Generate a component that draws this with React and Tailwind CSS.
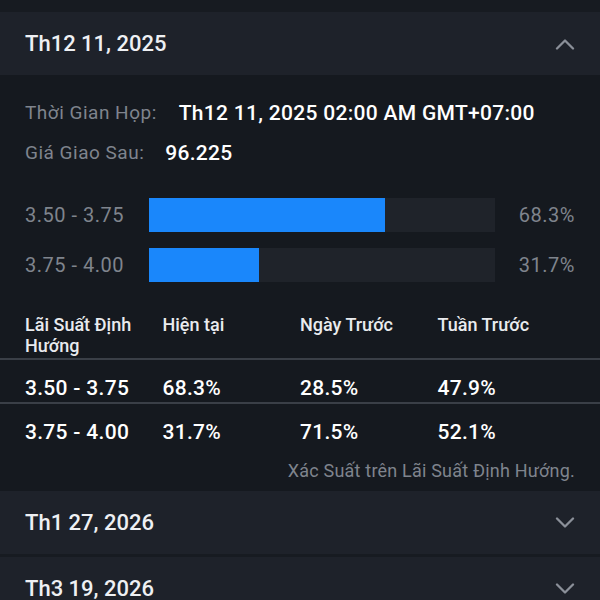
const bars = [
	{ range: "3.50 - 3.75", pct: 68.3 },
	{ range: "3.75 - 4.00", pct: 31.7 },
];

const rows = [
	["3.50 - 3.75", "68.3%", "28.5%", "47.9%"],
	["3.75 - 4.00", "31.7%", "71.5%", "52.1%"],
];

function Chevron({ up }) {
	return (
		<svg width="20" height="12" viewBox="0 0 20 12" fill="none" className="text-[#8b9099]">
			<path
				d={up ? "M2 10.5 L10 2.5 L18 10.5" : "M2 1.5 L10 9.5 L18 1.5"}
				stroke="currentColor"
				strokeWidth="2.3"
				strokeLinecap="round"
				strokeLinejoin="round"
			/>
		</svg>
	);
}

function Header({ title, open }) {
	return (
		<div className="flex h-[63px] shrink-0 items-center justify-between bg-[#1e222a] px-[25px]">
			<span className="text-[22px] font-medium leading-[26px] text-[#eef0f3]">{title}</span>
			<Chevron up={open} />
		</div>
	);
}

export default function App() {
	return (
		<div
			className="flex h-[600px] w-[600px] flex-col overflow-hidden bg-[#15191f]"
			style={{ fontFamily: "Roboto, 'Noto Sans', sans-serif" }}
		>
			<div className="h-[12px] shrink-0 bg-[#171b21]"></div>
			<Header title="Th12 11, 2025" open />

			{/* expanded body */}
			<div className="shrink-0 bg-[#15191f] pt-[26px] pb-[11px]">
				<div className="flex flex-col gap-[16px] px-[25px] leading-[24px]">
					<div className="flex items-center gap-[22px]">
						<span className="text-[19px] tracking-[0.5px] text-[#7f848d]">Thời Gian Họp:</span>
						<span className="text-[21px] font-medium tracking-[0.3px] text-white">
							Th12 11, 2025 02:00 AM GMT+07:00
						</span>
					</div>
					<div className="flex items-center gap-[21px]">
						<span className="text-[19px] tracking-[0.5px] text-[#7f848d]">Giá Giao Sau:</span>
						<span className="text-[21px] font-medium tracking-[0.3px] text-white">96.225</span>
					</div>
				</div>

				<div className="mt-[33px] flex flex-col gap-[16px] px-[25px]">
					{bars.map((b) => (
						<div key={b.range} className="flex h-[34px] items-center">
							<span className="w-[124px] text-[20px] tracking-[0.5px] text-[#7f848d]">{b.range}</span>
							<div className="h-full w-[346px] bg-[#1f232a]">
								<div className="h-full bg-[#1a87fb]" style={{ width: `${b.pct}%` }}></div>
							</div>
							<span className="flex-1 text-right text-[20px] tracking-[0.5px] text-[#7f848d]">{b.pct}%</span>
						</div>
					))}
				</div>

				<div className="mt-[32px] grid grid-cols-4 px-[25px] pb-[2px] text-[18px] font-medium leading-[21px] text-[#e9ebee]">
					<span className="pr-4">Lãi Suất Định Hướng</span>
					<span>Hiện tại</span>
					<span>Ngày Trước</span>
					<span>Tuần Trước</span>
				</div>

				{rows.map((r) => (
					<div
						key={r[0]}
						className="grid grid-cols-4 border-t-2 border-[#3a3f47] px-[25px] pt-[17px] pb-[3px] text-[21px] font-medium leading-[22px] tracking-[0.3px] text-white"
					>
						{r.map((c, i) => (
							<span key={i}>{c}</span>
						))}
					</div>
				))}

				<div className="mt-[16px] px-[25px] text-right text-[18px] leading-[18px] tracking-[0.2px] text-[#7f848d]">
					Xác Suất trên Lãi Suất Định Hướng.
				</div>
			</div>

			<Header title="Th1 27, 2026" />
			<div className="h-[3px] shrink-0 bg-[#171b21]"></div>
			<Header title="Th3 19, 2026" />
		</div>
	);
}
